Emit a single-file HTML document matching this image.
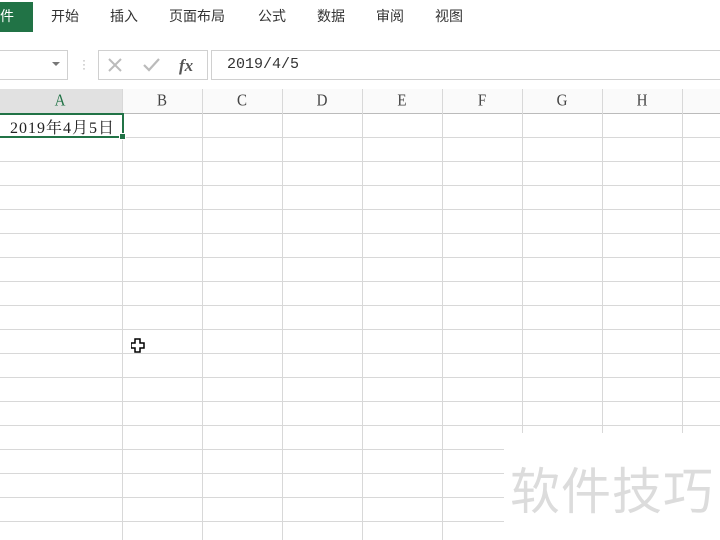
<!DOCTYPE html><html><head><meta charset="utf-8"><style>
body{margin:0;width:720px;height:540px;overflow:hidden;background:#fff;position:relative;font-family:"Liberation Sans","Noto Sans CJK SC",sans-serif}
.a{position:absolute}
.tab{position:absolute;top:6px;font-size:14px;color:#333}
.hd{position:absolute;top:93px;font-family:"Liberation Serif",serif;font-size:15px;color:#444;text-align:center;width:80px;transform:scaleY(1.1)}
</style></head><body>
<div class="a" style="left:0;top:2px;width:33px;height:30px;background:#217346"></div>
<div class="tab" style="left:0;color:#fff">件</div>
<div class="tab" style="left:51px">开始</div>
<div class="tab" style="left:110px">插入</div>
<div class="tab" style="left:169px">页面布局</div>
<div class="tab" style="left:258px">公式</div>
<div class="tab" style="left:317px">数据</div>
<div class="tab" style="left:376px">审阅</div>
<div class="tab" style="left:435px">视图</div>

<div class="a" style="left:-1px;top:50px;width:67px;height:28px;border:1px solid #d0d0d0"></div>
<div class="a" style="left:52px;top:62px;width:0;height:0;border-left:4px solid transparent;border-right:4px solid transparent;border-top:4px solid #777"></div>
<div class="a" style="left:82px;top:58px;color:#aaa;font-size:12px;line-height:4px">·<br>·<br>·</div>
<div class="a" style="left:98px;top:50px;width:108px;height:28px;border:1px solid #d0d0d0"></div>
<svg class="a" style="left:98px;top:50px" width="110" height="30"><path d="M11 9l12 12M23 9l-12 12" stroke="#bbb" stroke-width="2" fill="none"/><path d="M46 15l5 5 10-11" stroke="#bbb" stroke-width="2.2" fill="none"/><text x="81" y="21" font-family="Liberation Serif" font-style="italic" font-weight="bold" font-size="17" fill="#555">fx</text></svg>
<div class="a" style="left:211px;top:50px;width:520px;height:28px;border:1px solid #d0d0d0"></div>
<div class="a" style="left:227px;top:56px;font-family:'Liberation Mono',monospace;font-size:15px;color:#333">2019/4/5</div>

<div class="a" style="left:0;top:89px;width:720px;height:24px;background:#fafafa;border-bottom:1px solid #bbb"></div>
<div class="a" style="left:0;top:89px;width:122px;height:24px;background:#e1e1e1;border-bottom:1px solid #217346"></div>
<div class="a" style="left:0;top:114px;width:720px;height:426px;background-image:linear-gradient(#d8d8d8 1px,transparent 1px);background-size:100% 24px;background-position:0 23px"></div>
<div class="a" style="left:122px;top:89px;width:600px;height:451px;background-image:linear-gradient(90deg,#d8d8d8 1px,transparent 1px);background-size:80px 100%"></div>
<div class="hd" style="left:20px;color:#217346">A</div>
<div class="hd" style="left:122px">B</div><div class="hd" style="left:202px">C</div><div class="hd" style="left:282px">D</div><div class="hd" style="left:362px">E</div><div class="hd" style="left:442px">F</div><div class="hd" style="left:522px">G</div><div class="hd" style="left:602px">H</div>
<div class="a" style="left:-2px;top:113px;width:122px;height:21px;border:2px solid #217346;background:#fff"></div>
<div class="a" style="left:119px;top:133px;width:5px;height:5px;background:#217346;border:1px solid #fff"></div>
<div class="a" style="left:10px;top:115px;font-family:'Liberation Serif','Noto Serif CJK SC',serif;font-size:16px;letter-spacing:1px;color:#222">2019年4月5日</div>
<svg class="a" style="left:131px;top:338px" width="16" height="16"><path d="M4 1h5v4h4v5h-4v4h-5v-4h-4v-5h4z" fill="#fff" stroke="#000" stroke-width="1.5"/></svg>
<div class="a" style="left:504px;top:433px;width:216px;height:107px;background:#fff"></div>
<div class="a" style="left:510px;top:452px;font-size:50px;color:#dcdcdc;letter-spacing:1px;font-family:'Noto Sans CJK SC',sans-serif">软件技巧</div>
</body></html>
